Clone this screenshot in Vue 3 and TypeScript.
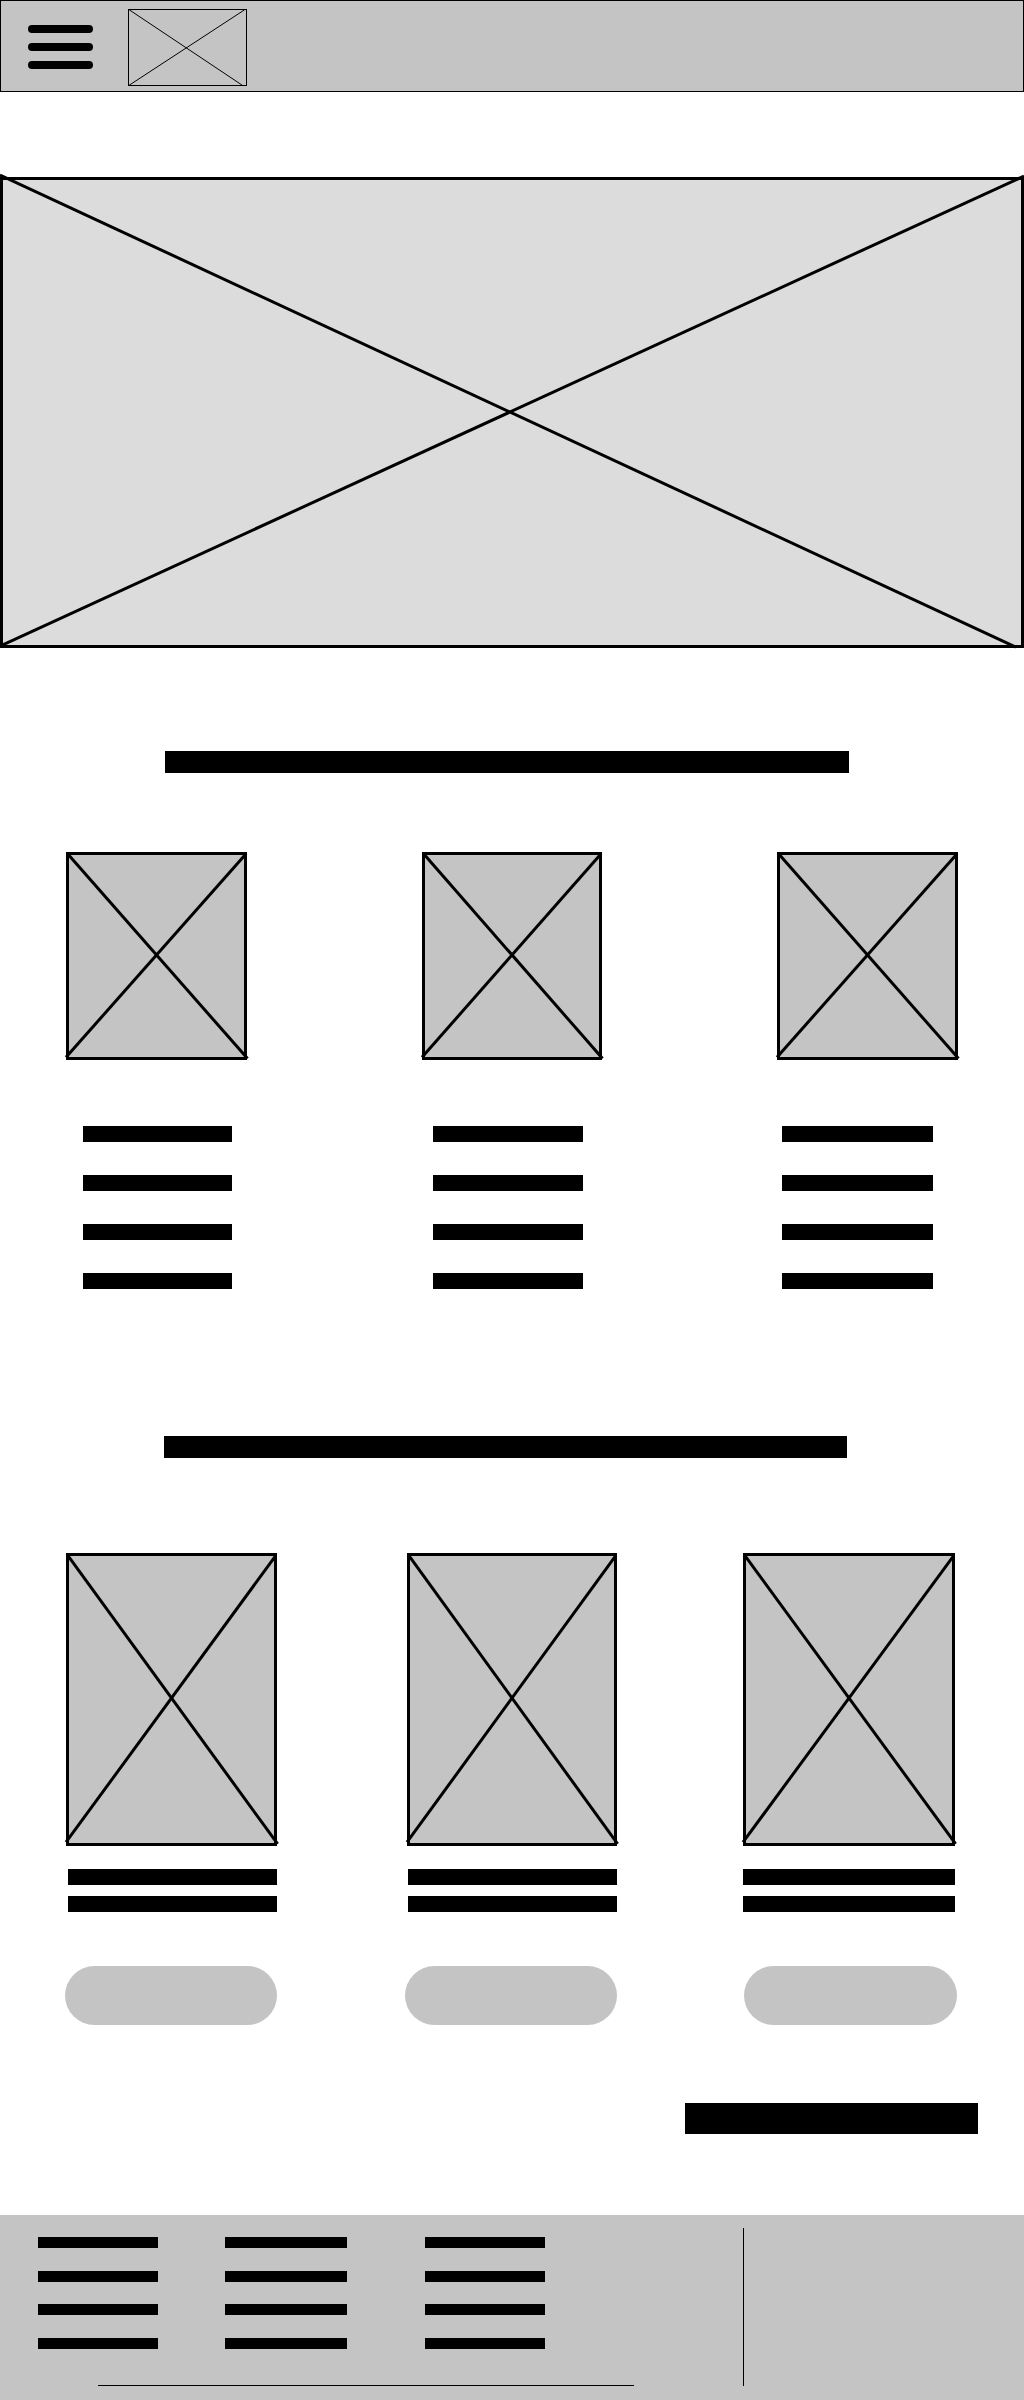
<script setup lang="ts">
import { h, type FunctionalComponent } from 'vue'

interface CrossProps {
  lines: number[][]
}

// Picture placeholder: a frame crossed by two diagonals, given in percent of the frame.
const Placeholder: FunctionalComponent<CrossProps> = (props) =>
  h(
    'svg',
    { 'aria-hidden': 'true' },
    props.lines.map(([x1, y1, x2, y2]) =>
      h('line', { x1: `${x1}%`, y1: `${y1}%`, x2: `${x2}%`, y2: `${y2}%` }),
    ),
  )
Placeholder.props = ['lines']

const logoLines = [[1, 1, 96, 99], [1, 99, 98, 1]]
const heroLines = [[0, -0.4, 99.2, 99.8], [0, 99.6, 100, -0.2]]
const tileLines = [[1, 1, 100.3, 99.3], [0, 98.7, 99.5, 0.8]]
</script>

<template>
  <div class="page">
    <header class="topbar">
      <button class="menu" type="button" aria-label="Menu">
        <span v-for="n in 3" :key="n"></span>
      </button>
      <Placeholder class="frame logo" :lines="logoLines" />
    </header>

    <main>
      <Placeholder class="frame hero" :lines="heroLines" />

      <section>
        <div class="title"></div>
        <div class="row tiles">
          <Placeholder v-for="n in 3" :key="n" class="frame tile" :lines="tileLines" />
        </div>
        <div class="row captions">
          <div v-for="n in 3" :key="n" class="stack">
            <div v-for="m in 4" :key="m" class="bar"></div>
          </div>
        </div>
      </section>

      <section>
        <div class="title second"></div>
        <div class="row cards">
          <Placeholder v-for="n in 3" :key="n" class="frame card" :lines="tileLines" />
        </div>
        <div class="row details">
          <div v-for="n in 3" :key="n" class="stack">
            <div v-for="m in 2" :key="m" class="bar"></div>
          </div>
        </div>
        <div class="row actions">
          <button v-for="n in 3" :key="n" class="pill" type="button" :aria-label="`Card ${n}`"></button>
        </div>
        <div class="more"></div>
      </section>
    </main>

    <footer class="footer">
      <div class="footer-main">
        <div class="row links">
          <div v-for="n in 3" :key="n" class="stack">
            <div v-for="m in 4" :key="m" class="bar"></div>
          </div>
        </div>
        <div class="rule"></div>
      </div>
      <div class="divider"></div>
      <div class="footer-side"></div>
    </footer>
  </div>
</template>

<style>
body {
  margin: 0;
  background: #fff;
}
</style>

<style scoped>
.page {
  font-family: "Liberation Sans", sans-serif;
}

.frame {
  display: block;
  box-sizing: border-box;
  width: 100%;
  overflow: visible;
  background: #c4c4c4;
  box-shadow: inset 0 0 0 3px #000;
  stroke: #000;
  stroke-width: 3px;
}

.topbar {
  box-sizing: border-box;
  display: flex;
  align-items: flex-start;
  height: 92px;
  padding: 8px 27px;
  border: 1px solid #000;
  background: #c4c4c4;
}

.menu {
  display: flex;
  flex-direction: column;
  gap: 10px;
  width: 65px;
  margin: 16px 35px 0 0;
  padding: 0;
  border: 0;
  background: none;
}

.menu span {
  height: 8px;
  border-radius: 4px;
  background: #000;
}

.logo {
  width: 119px;
  height: 77px;
  box-shadow: inset 0 0 0 1px #000;
  stroke-width: 1px;
}

.hero {
  height: 471px;
  margin-top: 85px;
  background: #dcdcdc;
}

.title {
  height: 22px;
  margin: 103px 175px 0 165px;
  background: #000;
}

.title.second {
  height: 22px;
  margin: 147px 177px 0 164px;
}

.row {
  display: grid;
}

.row > :nth-child(2) {
  grid-column: 3;
}

.row > :nth-child(3) {
  grid-column: 5;
}

.stack {
  display: flex;
  flex-direction: column;
}

.bar {
  height: 16px;
  background: #000;
}

.tiles {
  grid-template-columns: 181fr 175fr 180fr 175fr 181fr;
  padding: 79px 66px 0;
}

.tile {
  height: 208px;
}

.captions {
  grid-template-columns: 149fr 201fr 150fr 199fr 151fr;
  padding: 66px 91px 0 83px;
}

.captions .stack {
  gap: 33px;
}

.cards {
  grid-template-columns: 211fr 130fr 210fr 126fr 212fr;
  padding: 95px 69px 0 66px;
}

.card {
  height: 293px;
}

.details {
  grid-template-columns: 209fr 131fr 209fr 126fr 212fr;
  padding: 23px 69px 0 68px;
}

.details .stack {
  gap: 11px;
}

.actions {
  grid-template-columns: 212fr 128fr 212fr 127fr 213fr;
  padding: 54px 67px 0 65px;
}

.pill {
  height: 59px;
  padding: 0;
  border: 0;
  border-radius: 30px;
  background: #c4c4c4;
}

.more {
  width: 293px;
  height: 31px;
  margin: 78px 46px 0 auto;
  background: #000;
}

.footer {
  display: flex;
  margin-top: 81px;
  padding-bottom: 14px;
  background: #c4c4c4;
}

.footer-main {
  flex: 743 1 0;
}

.links {
  grid-template-columns: 120fr 67fr 122fr 78fr 120fr;
  padding: 22px 198px 0 38px;
}

.links .stack {
  justify-content: space-between;
  height: 112px;
}

.links .bar {
  height: 11px;
}

.rule {
  height: 1px;
  margin: 36px 109px 0 98px;
  background: #000;
}

.divider {
  width: 1px;
  margin-top: 13px;
  background: #000;
}

.footer-side {
  flex: 280 1 0;
}
</style>
